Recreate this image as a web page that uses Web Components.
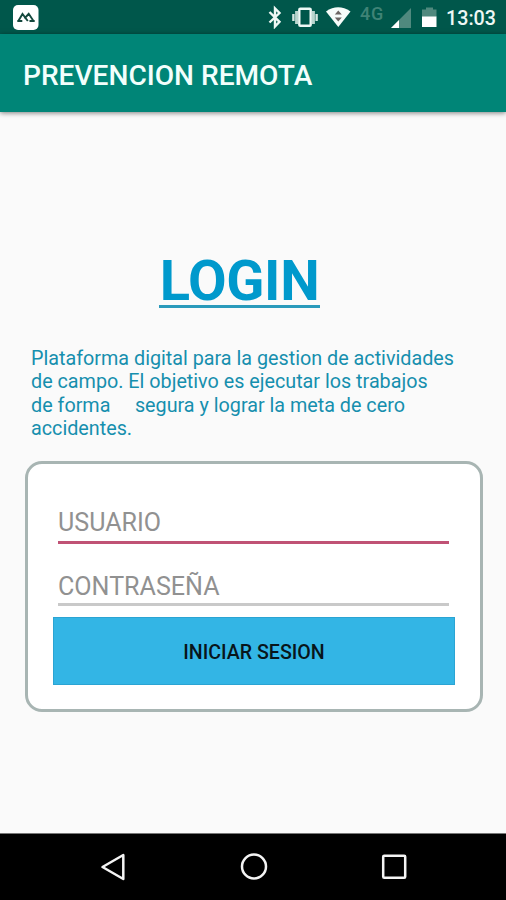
<!DOCTYPE html>
<html lang="es">
<head>
<meta charset="utf-8">
<title>Prevencion Remota</title>
<style>
html, body { margin: 0; height: 100%; }
body { font-family: Roboto, "Noto Sans", sans-serif; background: #fafafa; overflow: hidden; }
</style>
</head>
<body>
<phone-screen>
  <status-bar slot="top" time="13:03"></status-bar>
  <app-bar slot="top">PREVENCION REMOTA</app-bar>
  <login-title>LOGIN</login-title>
  <intro-text><span>Plataforma digital para la gestion de actividades</span><br><span>de campo. El objetivo es ejecutar los trabajos</span><br><span>de forma &nbsp; &nbsp; segura y lograr la meta de cero</span><br><span>accidentes.</span></intro-text>
  <login-card>
    <text-field active>USUARIO</text-field>
    <text-field>CONTRASEÑA</text-field>
    <action-button>INICIAR SESION</action-button>
  </login-card>
  <nav-bar slot="bottom"></nav-bar>
</phone-screen>
<script>
const define = (name, markup, setup) => customElements.define(name, class extends HTMLElement {
  constructor() {
    super();
    this.attachShadow({ mode: "open" }).innerHTML = markup;
  }
  connectedCallback() { if (setup) setup(this); }
});

define("status-bar", `
<style>
:host { display: flex; align-items: flex-start; height: 34px; box-sizing: border-box; padding: 5px 11px 0 13px; background: #00574b; color: #eef8f5; }
svg { display: block; flex: none; }
.space { flex: 1; }
.net { font-size: 18px; line-height: 18px; width: 24px; margin: 0 7px 0 9px; color: #3f8376; font-weight: 500; letter-spacing: .8px; white-space: nowrap; }
.time { font-size: 19.7px; line-height: 26px; width: 49px; margin-left: 9px; padding-top: 1px; font-weight: 500; white-space: nowrap; }
</style>
<svg width="26" height="26" viewBox="0 0 26 26"><rect width="25.5" height="25" rx="5" fill="#fff"/><path d="M4.300 16h5M16.500 16h5.200M5.300 16 9.500 9 14.800 16M11.500 13.500 15.700 8.800 20.500 16" fill="none" stroke="#14483d" stroke-width="1.900"/></svg>
<div class="space"></div>
<svg style="margin-right:-1px" width="16" height="24" viewBox="0 0 16 24"><path d="M3.500 7 13.500 16.800 9 21.500V3.500L13.500 8 3.500 17.500" fill="none" stroke="#eef8f5" stroke-width="2.400"/></svg>
<svg style="margin-left:9px" width="28" height="24" viewBox="0 0 28 24"><rect x="9.300" y="3.800" width="11.400" height="17" rx="1" fill="none" stroke="#eef8f5" stroke-width="2.400"/><path d="M6.600 6v13M23.400 6v13" stroke="#b9d5ce" stroke-width="3"/><path d="M3.400 9v7M26.600 9v7" stroke="#d5e7e2" stroke-width="2.400"/></svg>
<svg style="margin-left:7px" width="26" height="24" viewBox="0 0 26 24"><path d="M1 6.500Q13-1.800 25.500 6.500L13.300 22Z" fill="#f6fcfa"/><path d="M9.800 9.500 13.300 5.500l3.500 4zM9.800 12.500h7L13.300 16.500z" fill="#6b6563"/></svg>
<div class="net">4G</div>
<svg width="20" height="24" viewBox="0 0 20 24"><path d="M20 3v20H0z" fill="#50897e"/><path d="M8 15v8H0z" fill="#fff"/></svg>
<svg style="margin-left:11px" width="15" height="24" viewBox="0 0 15 24"><path d="M4 2.500h7v2h3.500V12H0V4.500h4z" fill="#50897e"/><path d="M0 11.500h14.500V22H0z" fill="#fff"/></svg>
<div class="time"></div>`, el => { el.shadowRoot.querySelector(".time").textContent = el.getAttribute("time"); });

define("app-bar", `
<style>
:host { display: flex; align-items: center; height: 78px; padding: 5px 0 0 23px; box-sizing: border-box; background: #008577; color: #f2fffc; font-size: 28.1px; font-weight: 500; white-space: nowrap; box-shadow: 0 1px 5px rgba(0,0,0,.5); position: relative; }
</style><slot></slot>`);

define("login-title", `
<style>
:host { display: block; width: 161px; margin: 136px 0 0 159px; text-align: center; white-space: nowrap; font-size: 56px; line-height: 66px; font-weight: 700; letter-spacing: -.3px; color: #0099cc; }
.line { height: 3px; margin-top: -9px; background: #2a9abb; }
</style><div><slot></slot></div><div class="line"></div>`);

define("intro-text", `
<style>
:host { display: block; margin: 39px 0 0 31px; font-size: 19.75px; line-height: 23.3px; color: #168fae; white-space: nowrap; }
</style><slot></slot>`);

define("login-card", `
<style>
:host { display: flex; flex-direction: column; box-sizing: border-box; width: 458px; height: 251px; margin: 21px 0 0 25px; padding: 36px 25px 0; border: 3px solid #a8b5b3; border-radius: 17px; background: #fff; }
</style><slot></slot>`);

define("text-field", `
<style>
:host { display: block; box-sizing: border-box; height: 62px; margin: 0 6px 0 5px; padding-top: 28px; font-size: 25.1px; line-height: 30px; color: #919191; border-bottom: 3px solid #c9c9c9; white-space: nowrap; }
:host([active]) { height: 44px; padding-top: 8px; border-bottom-color: #c05275; }
</style><slot></slot>`);

define("action-button", `
<style>
:host { display: flex; align-items: center; justify-content: center; box-sizing: border-box; height: 68px; margin-top: 11px; padding-top: 2px; background: #33b5e5; border: 1px solid #2ba4d3; color: #08151b; font-size: 19.6px; font-weight: 500; }
</style><slot></slot>`);

define("nav-bar", `
<style>
:host { display: flex; align-items: center; justify-content: space-between; box-sizing: border-box; height: 67px; padding: 0 98px 0 99px; background: #000; border-top: 1px solid #777; }
svg { fill: none; stroke: #f4f4f4; stroke-width: 2.500; }
</style>
<svg width="28" height="28" viewBox="0 0 28 28"><path d="M24.300 2v24L3.500 14z" stroke-linejoin="round"/></svg>
<svg width="28" height="28" viewBox="0 0 28 28"><circle cx="14" cy="13.500" r="12"/></svg>
<svg width="28" height="28" viewBox="0 0 28 28"><rect x="3.200" y="2.800" width="22" height="22" rx="1"/></svg>`);

define("phone-screen", `
<style>
:host { display: flex; flex-direction: column; width: 506px; height: 900px; background: #fafafa; }
main { flex: 1; min-height: 0; }
</style>
<slot name="top"></slot><main><slot></slot></main><slot name="bottom"></slot>`);
</script>
</body>
</html>
